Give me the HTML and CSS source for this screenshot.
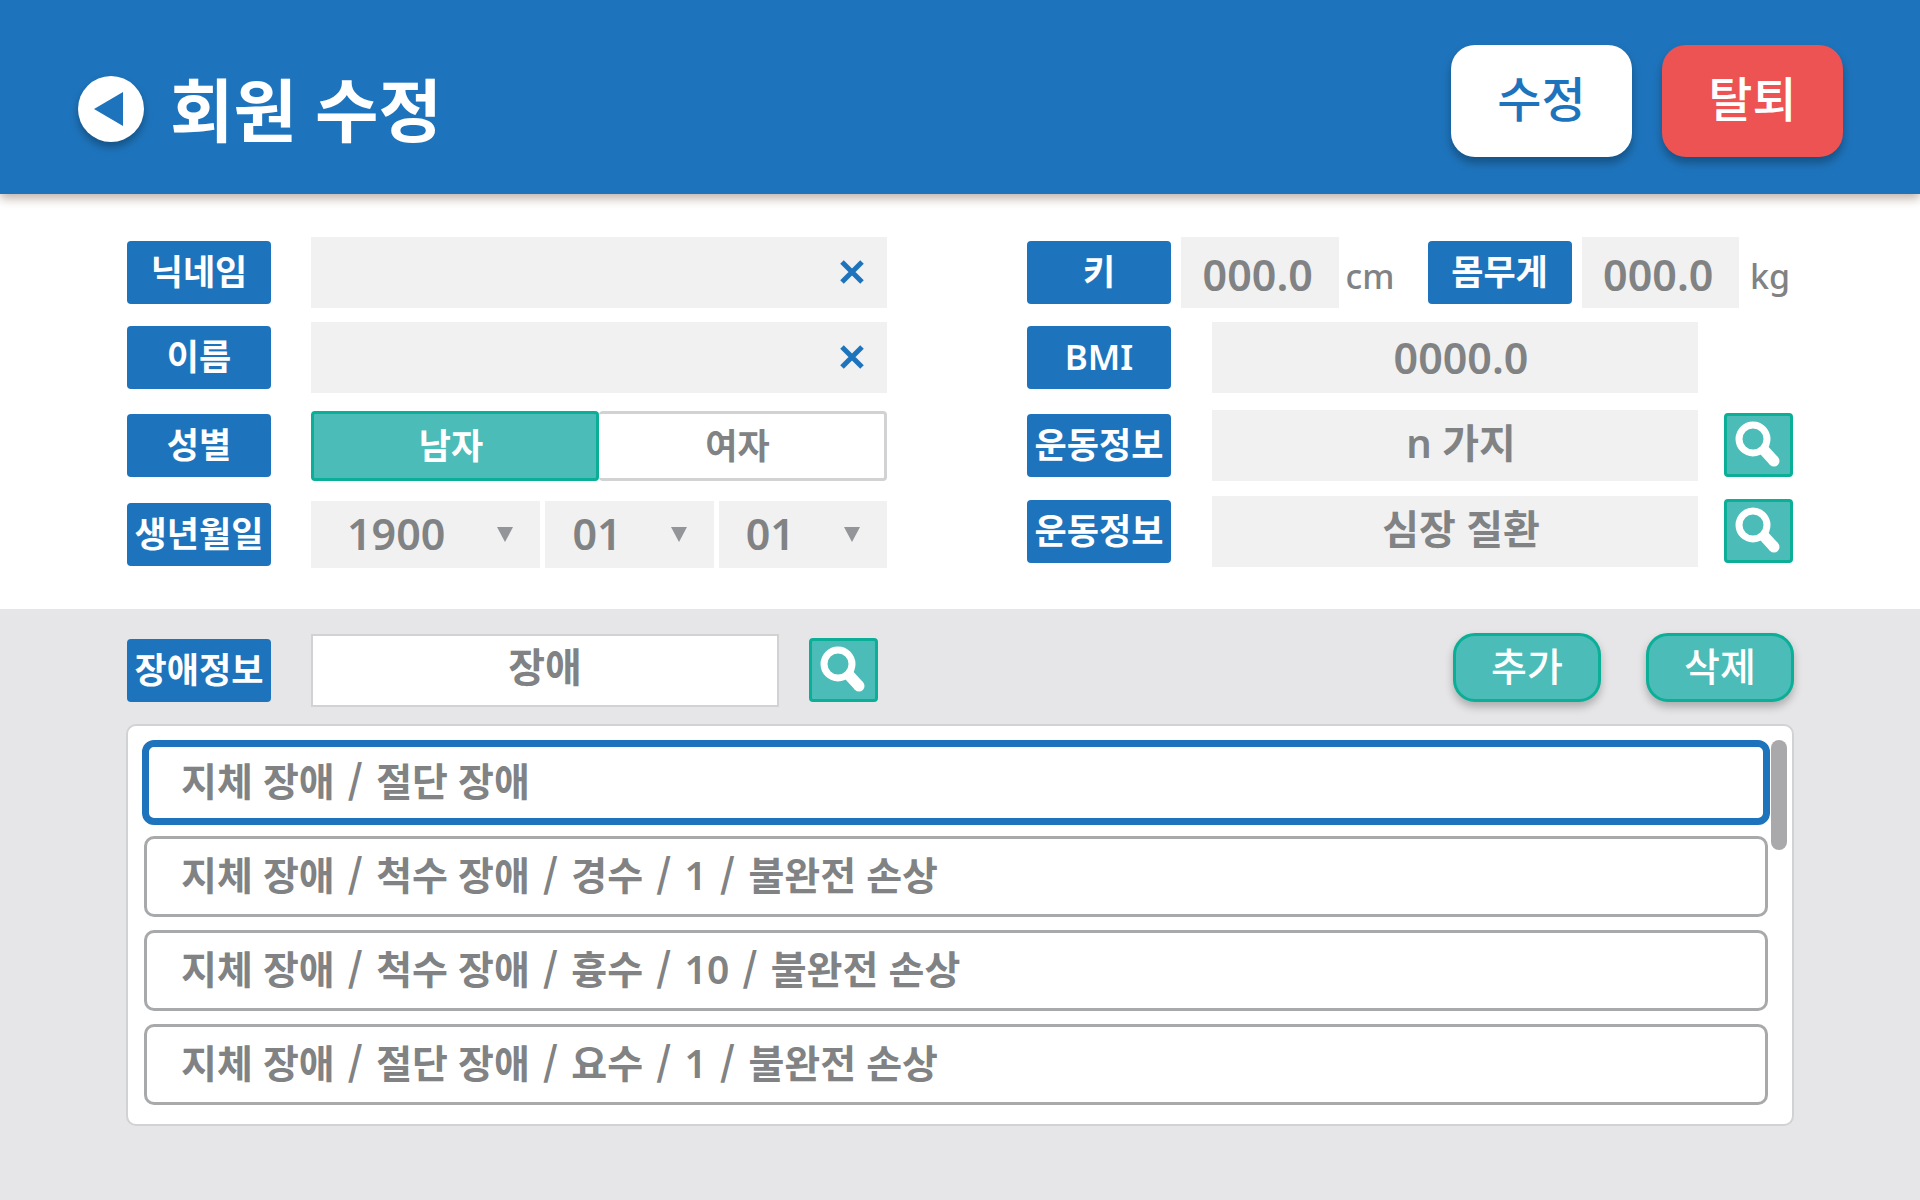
FILE: index.html
```html
<!DOCTYPE html>
<html lang="ko">
<head>
    <meta charset="UTF-8">
    <meta name="viewport" content="width=device-width, initial-scale=1.0">
    <title>회원 수정</title>
    <link rel="stylesheet" href="styles.css">
</head>
<body>
    <svg class="sprite" aria-hidden="true">
        <symbol id="icon-search" viewBox="0 0 63 58">
            <circle cx="26" cy="23" r="14" fill="none" stroke="#fff" stroke-width="7"/>
            <path d="M36 33L47 45" fill="none" stroke="#fff" stroke-width="11"/>
            <circle cx="47" cy="45" r="5.5" fill="#fff"/>
        </symbol>
        <symbol id="icon-close" viewBox="0 0 24 24">
            <path d="M2 2L22 22M22 2L2 22" fill="none" stroke="#1e74bc" stroke-width="5"/>
        </symbol>
    </svg>

    <header class="header">
        <a class="back" href="#" aria-label="뒤로">
            <svg viewBox="0 0 66 66"><path d="M16 33L45 16V50Z" fill="#1e74bc"/></svg>
        </a>
        <h1 class="title">회원 수정</h1>
        <div class="header-actions">
            <button type="button" class="btn-main">수정</button>
            <button type="button" class="btn-main btn-danger">탈퇴</button>
        </div>
    </header>

    <main>
        <form class="member-form">
            <div class="column column-left">
                <div class="row">
                    <label class="tag" for="nickname">닉네임</label>
                    <div class="text-field">
                        <input type="text" id="nickname">
                        <button type="button" class="clear" aria-label="닉네임 지우기"><svg><use href="#icon-close"/></svg></button>
                    </div>
                </div>
                <div class="row">
                    <label class="tag" for="name">이름</label>
                    <div class="text-field">
                        <input type="text" id="name">
                        <button type="button" class="clear" aria-label="이름 지우기"><svg><use href="#icon-close"/></svg></button>
                    </div>
                </div>
                <div class="row">
                    <span class="tag" id="genderTag">성별</span>
                    <div class="gender" role="radiogroup" aria-labelledby="genderTag">
                        <label><input type="radio" name="gender" value="m" checked><span>남자</span></label>
                        <label><input type="radio" name="gender" value="f"><span>여자</span></label>
                    </div>
                </div>
                <div class="row">
                    <label class="tag" for="year">생년월일</label>
                    <div class="birth">
                        <div class="select year"><select id="year"><option>1900</option></select></div>
                        <div class="select"><select aria-label="월"><option>01</option></select></div>
                        <div class="select"><select aria-label="일"><option>01</option></select></div>
                    </div>
                </div>
            </div>

            <div class="column column-right">
                <div class="row row-body">
                    <label class="tag" for="height">키</label>
                    <input type="text" class="value value-number" id="height" value="000.0">
                    <span class="unit">cm</span>
                    <label class="tag" for="weight">몸무게</label>
                    <input type="text" class="value value-number" id="weight" value="000.0">
                    <span class="unit">kg</span>
                </div>
                <div class="row row-info">
                    <label class="tag" for="bmi">BMI</label>
                    <input type="text" class="value value-number" id="bmi" value="0000.0">
                </div>
                <div class="row row-info">
                    <label class="tag" for="exercise">운동정보</label>
                    <input type="text" class="value" id="exercise" value="n 가지">
                    <button type="button" class="search" aria-label="검색"><svg><use href="#icon-search"/></svg></button>
                </div>
                <div class="row row-info">
                    <label class="tag" for="disease">운동정보</label>
                    <input type="text" class="value" id="disease" value="심장 질환">
                    <button type="button" class="search" aria-label="검색"><svg><use href="#icon-search"/></svg></button>
                </div>
            </div>
        </form>

        <section class="disability">
            <div class="toolbar">
                <label class="tag" for="disability">장애정보</label>
                <input type="text" class="value value-boxed" id="disability" value="장애">
                <button type="button" class="search" aria-label="검색"><svg><use href="#icon-search"/></svg></button>
                <div class="toolbar-actions">
                    <button type="button" class="btn-sub">추가</button>
                    <button type="button" class="btn-sub">삭제</button>
                </div>
            </div>
            <div class="list-box">
                <ul class="list">
                    <li><button type="button" class="item selected">지체 장애 <i>/</i> 절단 장애</button></li>
                    <li><button type="button" class="item">지체 장애 <i>/</i> 척수 장애 <i>/</i> 경수 <i>/</i> 1 <i>/</i> 불완전 손상</button></li>
                    <li><button type="button" class="item">지체 장애 <i>/</i> 척수 장애 <i>/</i> 흉수 <i>/</i> 10 <i>/</i> 불완전 손상</button></li>
                    <li><button type="button" class="item">지체 장애 <i>/</i> 절단 장애 <i>/</i> 요수 <i>/</i> 1 <i>/</i> 불완전 손상</button></li>
                </ul>
                <div class="scroll-thumb"></div>
            </div>
        </section>
    </main>
</body>
</html>
```

FILE: styles.css
```css
:root {
    --blue: #1e74bc;
    --red: #ed5353;
    --mint: #4bbcb8;
    --mint-line: #0bae96;
    --text: #808284;
    --field: #f1f1f1;
    --line: #d1d2d4;
}

* {
    box-sizing: border-box;
    margin: 0;
    padding: 0;
}

body {
    min-height: 100vh;
    display: flex;
    flex-direction: column;
    background: #fff;
    color: var(--text);
    font-family: "Noto Sans", "Noto Sans CJK KR", sans-serif;
}

button,
input,
select {
    font: inherit;
    color: inherit;
    border: none;
    border-radius: 0;
}

button {
    cursor: pointer;
}

.sprite {
    display: none;
}

/* header */
.header {
    display: flex;
    align-items: center;
    height: 194px;
    padding: 0 77px 0 78px;
    background: var(--blue);
    box-shadow: 0 4px 10px rgba(80, 50, 30, 0.4);
}

.back {
    width: 66px;
    height: 66px;
    margin-top: 24px;
    border-radius: 50%;
    background: #fff;
    box-shadow: 0 5px 8px rgba(0, 0, 0, 0.3);
}

.back svg {
    display: block;
}

.title {
    margin: 26px 0 0 26px;
    color: #fff;
    font-size: 69px;
    font-weight: 700;
    line-height: 80px;
}

.header-actions {
    display: flex;
    gap: 30px;
    margin-left: auto;
    margin-top: 7px;
}

.btn-main {
    width: 181px;
    height: 112px;
    padding-bottom: 10px;
    border-radius: 24px;
    background: #fff;
    color: var(--blue);
    font-size: 48px;
    font-weight: 500;
    box-shadow: 0 6px 10px rgba(0, 0, 0, 0.3);
}

.btn-danger {
    background: var(--red);
    color: #fff;
}

/* member form */
.member-form {
    display: grid;
    grid-template-columns: minmax(0, 760fr) minmax(0, 766fr);
    gap: 140px;
    padding: 38px 127px 30px;
}

.column {
    display: grid;
    grid-template-columns: minmax(0, 1fr);
}

.column-left {
    grid-template-rows: 80px 90px 87px 90px;
}

.column-right {
    grid-template-rows: 80px 90px 86px 86px;
}

.row {
    display: flex;
    align-items: center;
}

.tag {
    flex: none;
    width: 144px;
    height: 63px;
    border-radius: 4px;
    background: var(--blue);
    color: #fff;
    font-size: 35px;
    font-weight: 600;
    line-height: 62px;
    text-align: center;
    white-space: nowrap;
}

.text-field,
.gender,
.birth {
    flex: 1;
    min-width: 0;
    display: flex;
    margin-left: 40px;
}

.text-field {
    height: 71px;
    background: var(--field);
}

.text-field input {
    flex: 1;
    min-width: 0;
    padding-left: 24px;
    background: none;
    font-size: 40px;
}

.clear {
    width: 70px;
    background: none;
}

.clear svg {
    display: block;
    width: 24px;
    height: 24px;
    margin: 0 auto;
}

.gender label {
    flex: 1;
    height: 70px;
    cursor: pointer;
}

.gender input {
    position: absolute;
    opacity: 0;
}

.gender span {
    display: block;
    height: 100%;
    padding-right: 8px;
    border: 3px solid var(--line);
    border-radius: 4px;
    font-size: 35px;
    font-weight: 600;
    line-height: 64px;
    text-align: center;
}

.gender label + label span {
    border-left: none;
}

.gender input:checked + span {
    border-color: var(--mint-line);
    background: var(--mint);
    color: #fff;
}

.birth {
    gap: 5px;
}

.select {
    flex: 168;
    position: relative;
    height: 67px;
}

.select.year {
    flex: 229;
}

.select select {
    width: 100%;
    height: 100%;
    padding: 0 0 1px 27px;
    appearance: none;
    background: var(--field);
    font-size: 43px;
    font-weight: 600;
}

.select.year select {
    padding-left: 36px;
}

.select::after {
    content: "";
    position: absolute;
    right: 27px;
    top: 26px;
    border: solid transparent;
    border-width: 15px 8px 0;
    border-top-color: #939598;
    pointer-events: none;
}

.value {
    min-width: 0;
    height: 71px;
    padding-bottom: 8px;
    background: var(--field);
    font-size: 40px;
    font-weight: 600;
    text-align: center;
}

.value-number {
    padding-bottom: 0;
    font-size: 43px;
}

.row-body .value {
    flex: 1;
    margin-left: 10px;
    padding: 4px 4px 0 0;
}

.unit {
    width: 89px;
    padding: 8px 0 0 7px;
    font-size: 34px;
    font-weight: 500;
}

.unit:last-child {
    width: 54px;
    padding-left: 11px;
}

.row-info .value {
    flex: 1;
    margin-left: 41px;
    margin-right: 26px;
    padding-left: 12px;
}

.row-info .value:last-child {
    margin-right: 95px;
}

.search {
    flex: none;
    width: 69px;
    height: 64px;
    border: 3px solid var(--mint-line);
    border-radius: 4px;
    background: var(--mint);
}

.search svg {
    display: block;
    width: 63px;
    height: 58px;
}

/* disability list */
main {
    flex: 1;
    display: flex;
    flex-direction: column;
}

.disability {
    flex: 1;
    padding: 23px 126px 75px;
    background: #e6e6e8;
}

.toolbar {
    display: flex;
    align-items: center;
    height: 76px;
    padding-left: 1px;
}

.value-boxed {
    width: 468px;
    height: 73px;
    margin: 0 30px 0 40px;
    padding-bottom: 10px;
    border: 2px solid var(--line);
    background: #fff;
}

.toolbar-actions {
    display: flex;
    gap: 45px;
    margin-left: auto;
}

.btn-sub {
    width: 148px;
    height: 69px;
    margin-bottom: 6px;
    padding-bottom: 3px;
    border: 3px solid var(--mint-line);
    border-radius: 22px;
    background: var(--mint);
    color: #fff;
    font-size: 39px;
    font-weight: 500;
    line-height: 56px;
    box-shadow: 0 5px 8px rgba(0, 0, 0, 0.25);
}

.list-box {
    display: flex;
    align-items: flex-start;
    gap: 3px;
    margin-top: 16px;
    padding: 14px 5px 19px 16px;
    border: 2px solid var(--line);
    border-radius: 10px;
    background: #fff;
}

.list {
    flex: 1;
    display: grid;
    gap: 13px;
    padding-top: 2px;
    list-style: none;
}

.list li {
    display: grid;
    height: 81px;
}

.item {
    padding: 0 0 7px 34px;
    border: 3px solid #a7a9ab;
    border-radius: 10px;
    background: #fff;
    font-size: 39px;
    font-weight: 600;
    text-align: left;
}

.item i {
    margin: 0 3px;
    font-family: "Noto Sans CJK KR", sans-serif;
    font-style: normal;
    line-height: 1;
}

.item.selected {
    margin: -2px;
    padding-left: 32px;
    border: 7px solid var(--blue);
    border-radius: 12px;
}

.scroll-thumb {
    width: 16px;
    height: 110px;
    border-radius: 8px;
    background: #a9a9ab;
}
```
